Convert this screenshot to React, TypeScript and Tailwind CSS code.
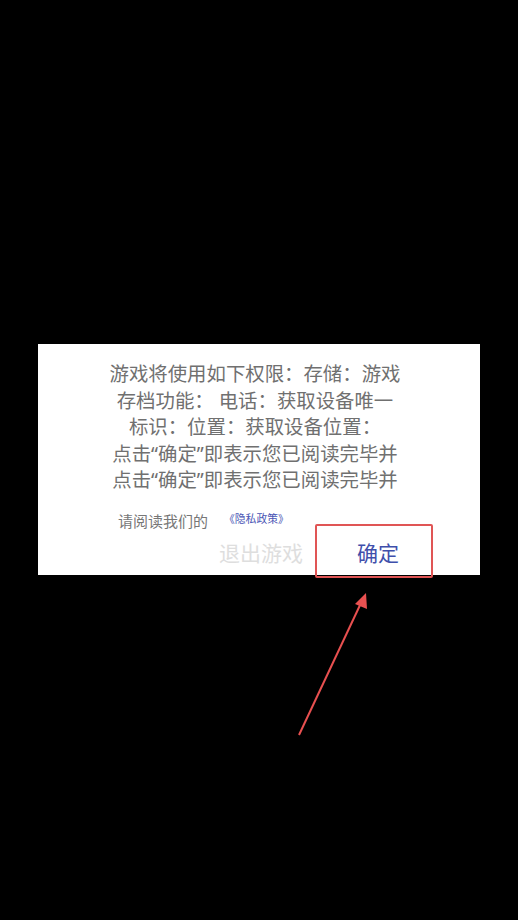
export default function App() {
  const lines = [
    '游戏将使用如下权限：存储：游戏',
    '存档功能： 电话：获取设备唯一',
    '标识：位置：获取设备位置：',
    '点击“确定”即表示您已阅读完毕并',
    '点击“确定”即表示您已阅读完毕并',
  ];

  return (
    <div
      className="relative h-[920px] w-[518px] overflow-hidden bg-black"
      style={{ fontFamily: '"Noto Sans", "Noto Sans CJK SC", sans-serif' }}
    >
      <div className="pt-[344px] pl-[38px]">
        <div className="h-[231px] w-[442px] bg-white">
          <div className="pt-[17px] text-center text-[19.4px] leading-[26.5px] text-[#707070]">
            {lines.map((l, i) => (
              <p key={i} className="-ml-[8px] whitespace-pre">
                {l}
              </p>
            ))}
          </div>
          <div className="mt-[17px] flex items-center pl-[80px]">
            <span className="text-[15px] leading-[20px] text-[#777]">请阅读我们的</span>
            <span className="ml-[16px] -mt-[3px] text-[10.8px] leading-[16px] text-[#4a55b5]">
              《隐私政策》
            </span>
          </div>
          <div className="mt-[9px] flex items-center">
            <span className="ml-[181px] text-[21px] leading-[26px] text-[#dedede]">退出游戏</span>
            <span className="ml-[54px] text-[21px] leading-[26px] text-[#3f4fab]">确定</span>
          </div>
        </div>
      </div>

      {/* annotation box */}
      <div className="absolute left-[315px] top-[524px] h-[54px] w-[118px] rounded-[2px] border-2 border-[#e05555]" />

      {/* annotation arrow */}
      <svg className="absolute left-0 top-0" width="518" height="920" viewBox="0 0 518 920">
        <line x1="299" y1="735" x2="361" y2="603" stroke="#e85050" strokeWidth="2" />
        <polygon points="366,593 355,604 367,609" fill="#e85050" />
      </svg>
    </div>
  );
}
